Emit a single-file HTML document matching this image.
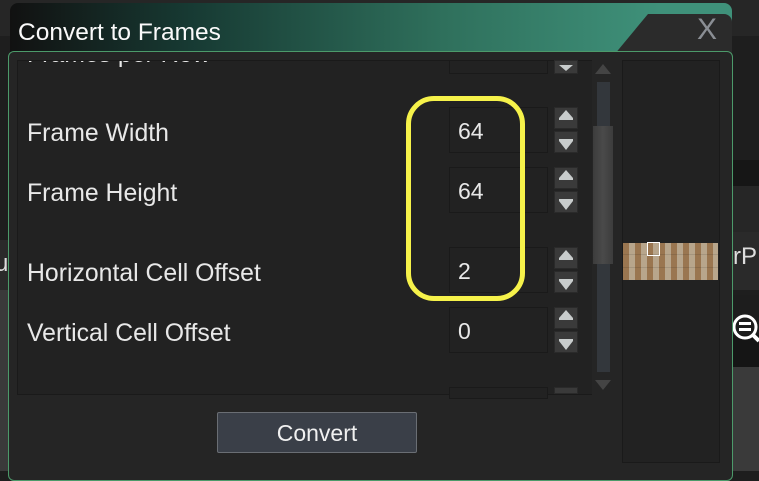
<!DOCTYPE html>
<html><head><style>
body{margin:0;width:759px;height:471px;background:#1e1e1e;position:relative;overflow:hidden;font-family:"Liberation Sans",sans-serif;color:#e8e8e8}
.a{position:absolute}
.lbl{position:absolute;left:27px;font-size:24.8px}
.inp{position:absolute;left:449px;width:99px;height:46px;background:#222;border:1px solid #1a1a1a;box-sizing:border-box;font-size:23px;padding:10px 0 0 8px}
.sp{position:absolute;left:554px;width:24px;height:22px;background:#3a3a3a;border:1px solid #2a2a2a;box-sizing:border-box}
</style></head><body>
<div class="a" style="left:0;top:0;width:759px;height:36px;background:#262626"></div>
<div class="a" style="left:733px;top:160px;width:26px;height:26px;background:#161616"></div>
<div class="a" style="left:733px;top:186px;width:26px;height:46px;background:#262626"></div>
<div class="a" style="left:733px;top:232px;width:26px;height:58px;background:#2a2a2a"></div>
<div class="a" style="left:733px;top:243px;font-size:24px;color:#ddd">rP</div>
<div class="a" style="left:733px;top:295px;width:26px;height:40px;background:#1d1d1d"></div>
<div class="a" style="left:733px;top:335px;width:26px;height:32px;background:#151515"></div>
<div class="a" style="left:733px;top:367px;width:26px;height:104px;background:#3a3a3a"></div>
<svg class="a" style="left:730px;top:312px" width="30" height="34"><circle cx="15" cy="15" r="11" fill="none" stroke="#fff" stroke-width="3"/><rect x="9" y="10" width="12" height="3" fill="#fff"/><rect x="9" y="16" width="12" height="3" fill="#fff"/><line x1="23" y1="23" x2="29" y2="29" stroke="#fff" stroke-width="4"/></svg>
<div class="a" style="left:0;top:240px;width:8px;height:50px;background:#2a2a2a"></div>
<div class="a" style="left:-5px;top:250px;font-size:24px;color:#ddd">u</div>
<div class="a" style="left:0;top:290px;width:8px;height:181px;background:#3a3a3a"></div>
<div class="a" style="left:10px;top:3px;width:722px;height:52px;border-radius:8px 8px 0 0;background:linear-gradient(90deg,#111 0%,#173a33 25%,#2f705c 60%,#3f917a 90%)"></div>
<div class="a" style="left:614px;top:14px;width:118px;height:41px;background:#2b2b2b;clip-path:polygon(34px 0,100% 0,100% 100%,0 100%);border-radius:0 8px 0 0"></div>
<div class="a" style="left:18px;top:19px;font-size:24.5px;color:#fafafa">Convert to Frames</div>
<div class="a" style="left:697px;top:13px;font-size:30px;color:#8a8e94">X</div>
<div class="a" style="left:8px;top:51px;width:725px;height:430px;background:#252525;border:1px solid #4c9a6a;border-radius:6px;box-sizing:border-box"></div>
<div class="a" style="left:17px;top:60px;width:598px;height:335px;background:#222;border:1px solid #1a1a1a;box-sizing:border-box;overflow:hidden">
 <div class="lbl" style="left:9px;top:-20px">Frames per Row</div>
</div>
<div class="inp" style="top:60px;height:14px"></div>
<div class="sp" style="top:60px;height:14px"></div>
<div class="lbl" style="top:120px">Frame Width</div>
<div class="inp" style="top:107px">64</div>
<div class="sp" style="top:107px"></div><div class="sp" style="top:131px"></div>
<div class="lbl" style="top:180px">Frame Height</div>
<div class="inp" style="top:167px">64</div>
<div class="sp" style="top:167px"></div><div class="sp" style="top:191px"></div>
<div class="lbl" style="top:260px">Horizontal Cell Offset</div>
<div class="inp" style="top:247px">2</div>
<div class="sp" style="top:247px"></div><div class="sp" style="top:271px"></div>
<div class="lbl" style="top:320px">Vertical Cell Offset</div>
<div class="inp" style="top:307px">0</div>
<div class="sp" style="top:307px"></div><div class="sp" style="top:331px"></div>
<div class="inp" style="top:387px;height:7px"></div>
<div class="sp" style="top:387px;height:7px"></div>
<svg class="a" style="left:554px;top:60px" width="24" height="300">
 <g fill="#c8cccc">
 <polygon points="5,5 19,5 12,11"/>
 <polygon points="12,50 19,58 5,58"/><rect x="5" y="58" width="14" height="2"/>
 <polygon points="5,81 19,81 12,90"/><rect x="5" y="79" width="14" height="2"/>
 <polygon points="12,110 19,118 5,118"/><rect x="5" y="118" width="14" height="2"/>
 <polygon points="5,141 19,141 12,150"/><rect x="5" y="139" width="14" height="2"/>
 <polygon points="12,190 19,198 5,198"/><rect x="5" y="198" width="14" height="2"/>
 <polygon points="5,221 19,221 12,230"/><rect x="5" y="219" width="14" height="2"/>
 <polygon points="12,250 19,258 5,258"/><rect x="5" y="258" width="14" height="2"/>
 <polygon points="5,281 19,281 12,290"/><rect x="5" y="279" width="14" height="2"/>
 </g></svg>
<div class="a" style="left:592px;top:60px;width:23px;height:335px;background:#252525"></div>
<svg class="a" style="left:592px;top:60px" width="23" height="335"><polygon points="11,4 19,14 3,14" fill="#444"/><polygon points="3,320 19,320 11,330" fill="#444"/></svg>
<div class="a" style="left:597px;top:82px;width:13px;height:290px;background:#33373c"></div>
<div class="a" style="left:593px;top:126px;width:20px;height:138px;background:linear-gradient(90deg,#3c3c3c,#4a4a4a,#3c3c3c)"></div>
<div class="a" style="left:622px;top:60px;width:98px;height:403px;background:#222;border:1px solid #1a1a1a;box-sizing:border-box"></div>
<div class="a" style="left:623px;top:243px;width:95px;height:37px;background:repeating-linear-gradient(0deg,transparent 0 12px,rgba(0,0,0,.1) 12px 13px),repeating-linear-gradient(90deg,#9a7650 0 6px,#b8a68c 6px 12px)"></div>
<div class="a" style="left:647px;top:242px;width:11px;height:12px;border:1px solid #fff"></div>
<div class="a" style="left:406px;top:96px;width:119px;height:205px;border:5px solid #f6f24a;border-radius:28px;box-sizing:border-box"></div>
<div class="a" style="left:217px;top:412px;width:200px;height:41px;background:#3a3f48;border:1px solid #6a6e74;border-radius:2px;box-sizing:border-box;text-align:center;font-size:23px;line-height:40px;color:#f0f0f0">Convert</div>
</body></html>
